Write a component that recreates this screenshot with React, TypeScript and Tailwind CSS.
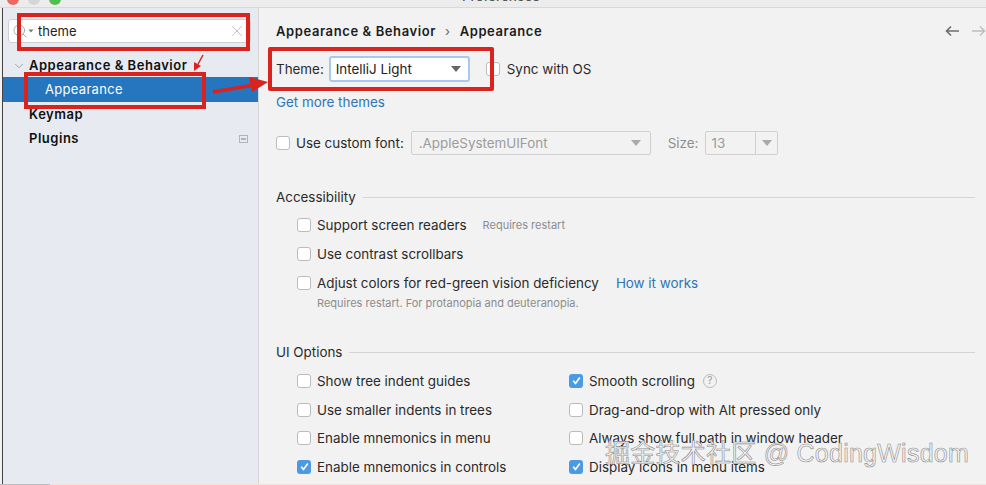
import { ChevronDown, Search, X } from "lucide-react";

const FONT = "font-['Inter','Liberation_Sans',sans-serif]";

function Box({ checked, className = "" }: { checked?: boolean; className?: string }) {
  if (checked) {
    return (
      <span className={`flex h-[14px] w-[14px] shrink-0 items-center justify-center rounded-[3px] bg-[#4a9ae4] ${className}`}>
        <svg width="11" height="11" viewBox="0 0 11 11" fill="none">
          <path d="M2.2 5.8 4.5 8.4 8.8 2.6" stroke="#fff" strokeWidth="1.7" />
        </svg>
      </span>
    );
  }
  return <span className={`block h-[14px] w-[14px] shrink-0 rounded-[3px] border border-[#bcbcbc] bg-white ${className}`} />;
}

function Option({ label, checked, children }: { label: string; checked?: boolean; children?: React.ReactNode }) {
  return (
    <div className="flex h-[28.7px] items-center">
      <Box checked={checked} />
      <span className="ml-[6px] whitespace-nowrap text-[13.4px] text-[#2a2a2a]">{label}</span>
      {children}
    </div>
  );
}

function GroupTitle({ title }: { title: string }) {
  return (
    <div className="flex h-[20px] items-center gap-[7px]">
      <span className="text-[13.4px] text-[#2a2a2a]">{title}</span>
      <span className="h-px flex-1 bg-[#d4d4d4]" />
    </div>
  );
}

function Caret({ className = "" }: { className?: string }) {
  return <span className={`block h-0 w-0 border-x-[5px] border-t-[6px] border-x-transparent ${className}`} />;
}

export default function App() {
  return (
    <div className={`relative flex h-[485px] w-[986px] flex-col overflow-hidden bg-[#f2f2f2] ${FONT}`}>
      {/* title bar, cut off by the crop */}
      <div className="relative h-[8px] shrink-0 overflow-hidden border-b border-[#d8d8d8] bg-[#ececec]">
        <span className="absolute left-[7px] top-[-7px] h-[12px] w-[12px] rounded-full bg-[#ee6a5f]" />
        <span className="absolute left-[28px] top-[-7px] h-[12px] w-[12px] rounded-full bg-[#d5d5d5]" />
        <span className="absolute left-[49px] top-[-7px] h-[12px] w-[12px] rounded-full bg-[#4fc04f]" />
        <span className="absolute left-[462px] top-[-12px] text-[13.4px] font-medium leading-[16px] text-[#555]">Preferences</span>
      </div>

      <div className="flex min-h-0 flex-1">
        {/* sidebar */}
        <div className="ml-[2px] w-[256px] shrink-0 border-l border-[#444] bg-[#e7ebf1] pt-[11px]">
          <div className="ml-[5px] mr-[7px] flex h-[24px] items-center rounded-[3px] border border-[#cfcfcf] bg-white pl-[3px] pr-[4px]">
            <Search size={16} strokeWidth={1.2} className="text-[#9a9a9a]" />
            <Caret className="ml-[-2px] scale-50 border-t-[#777]" />
            <span className="ml-[2px] flex-1 pt-px text-[13px] text-[#222]">theme</span>
            <X size={18} strokeWidth={0.8} className="text-[#999]" />
          </div>
          <div className="mt-[10px] text-[13px] font-semibold tracking-[0.52px] text-[#111]">
            <div className="flex h-[24px] items-center pl-[9px] pt-[2px]">
              <ChevronDown size={14} strokeWidth={1.3} className="text-[#8b8b8b]" />
              <span className="ml-[3px]">Appearance &amp; Behavior</span>
            </div>
            <div className="flex h-[25px] items-center bg-[#2675bf] pl-[42px] font-normal tracking-[0.3px] text-white">Appearance</div>
            <div className="flex h-[24px] items-center pl-[26px] pt-[2px]">Keymap</div>
            <div className="flex h-[24px] items-center justify-between pl-[26px] pr-[10px] pt-[2px]">
              <span>Plugins</span>
              <span className="flex h-[8px] w-[9px] items-center justify-center border border-[#b0b5bb]">
                <span className="h-[2px] w-[5px] bg-[#b0b5bb]" />
              </span>
            </div>
          </div>
        </div>
        <div className="w-px shrink-0 bg-[#d6d6d6]" />

        {/* content */}
        <div className="min-w-0 flex-1 pl-[17px] pr-[11px]">
          <div className="flex h-[38px] items-center justify-between pt-[8px]">
            <div className="flex items-center pt-[2px] text-[13px] font-semibold tracking-[0.6px] text-[#1c1c1c]">
              <span>Appearance &amp; Behavior</span>
              <span className="mx-[9px] font-normal text-[#666]">›</span>
              <span>Appearance</span>
            </div>
            <div className="mr-[-11px] flex items-center gap-[13px]">
              <svg width="14" height="12" viewBox="0 0 14 12" fill="none" stroke="#6e6e6e" strokeWidth="1.6">
                <path d="M14 6H1.5M6 1.5 1.5 6 6 10.5" />
              </svg>
              <svg width="14" height="12" viewBox="0 0 14 12" fill="none" stroke="#bdbdbd" strokeWidth="1.4">
                <path d="M0 6H12.5M8 1.5 12.5 6 8 10.5" />
              </svg>
            </div>
          </div>

          <div className="mt-[10px] flex h-[26px] items-center">
            <span className="text-[13.4px] text-[#2a2a2a]">Theme:</span>
            <div className="ml-[5px] flex h-[26px] w-[141px] items-center justify-between rounded-[3px] border-2 border-[#a6c9ec] bg-white pl-[5px] pr-[7px] text-[13.4px] text-[#222]">
              <span>IntelliJ Light</span>
              <Caret className="border-t-[#666]" />
            </div>
            <Box className="ml-[16px]" />
            <span className="ml-[7px] text-[13.4px] text-[#2a2a2a]">Sync with OS</span>
          </div>

          <div className="mt-[10px] text-[13.4px] leading-[20px] text-[#2f75b5]">Get more themes</div>

          <div className="mt-[19px] flex h-[24px] items-center">
            <Box />
            <span className="ml-[6px] text-[13.4px] text-[#2a2a2a]">Use custom font:</span>
            <div className="ml-[7px] flex h-[24px] w-[240px] items-center justify-between rounded-[2px] border border-[#d0d0d0] pl-[7px] pr-[9px] text-[13.4px] text-[#9c9c9c]">
              <span>.AppleSystemUIFont</span>
              <Caret className="border-t-[#aaa]" />
            </div>
            <span className="ml-[17px] text-[13.4px] text-[#8e8e8e]">Size:</span>
            <div className="ml-[7px] flex h-[24px] w-[73px] items-center rounded-[2px] border border-[#d0d0d0] text-[13.4px] text-[#9c9c9c]">
              <span className="w-[50px] border-r border-[#d0d0d0] pl-[5px] leading-[22px]">13</span>
              <Caret className="ml-[6px] border-t-[#aaa]" />
            </div>
          </div>

          <div className="mt-[32px]">
            <GroupTitle title="Accessibility" />
            <div className="mt-[4px] pl-[21px]">
              <Option label="Support screen readers">
                <span className="ml-[16px] text-[11px] text-[#8c8c8c]">Requires restart</span>
              </Option>
              <Option label="Use contrast scrollbars" />
              <Option label="Adjust colors for red-green vision deficiency">
                <span className="ml-[17px] text-[13.4px] text-[#2f75b5]">How it works</span>
              </Option>
              <div className="pl-[20px] text-[11px] leading-[13px] text-[#8c8c8c]">Requires restart. For protanopia and deuteranopia.</div>
            </div>
          </div>

          <div className="mt-[32px]">
            <GroupTitle title="UI Options" />
            <div className="mt-[4.5px] grid grid-cols-[272px_1fr] pl-[21px]">
              <Option label="Show tree indent guides" />
              <Option label="Smooth scrolling" checked>
                <span className="ml-[8px] flex h-[14px] w-[14px] items-center justify-center rounded-full border border-[#bbb] text-[10px] text-[#999]">?</span>
              </Option>
              <Option label="Use smaller indents in trees" />
              <Option label="Drag-and-drop with Alt pressed only" />
              <Option label="Enable mnemonics in menu" />
              <Option label="Always show full path in window header" />
              <Option label="Enable mnemonics in controls" checked />
              <Option label="Display icons in menu items" checked />
            </div>
          </div>
        </div>
      </div>

      {/* red annotations drawn on top of the screenshot */}
      <div className="absolute left-[17px] top-[13px] h-[38px] w-[233px] border-[4px] border-[#d8231f]" />
      <div className="absolute left-[24px] top-[72px] h-[37px] w-[182px] border-[4px] border-[#d8231f]" />
      <div className="absolute left-[268px] top-[47px] h-[44px] w-[226px] rounded-[2px] border-[4px] border-[#d8231f]" />
      <svg className="absolute left-0 top-0" width="986" height="485" fill="none">
        <path d="M203 55 197 66" stroke="#d8231f" strokeWidth="1.5" />
        <path d="M194 71 194 62 201 66Z" fill="#d8231f" />
        <path d="M213 92 254 85" stroke="#d8231f" strokeWidth="3.5" />
        <path d="M268 82 249 77 252 92Z" fill="#d8231f" />
      </svg>

      {/* watermark */}
      <div className="absolute left-[605px] top-[436px] whitespace-nowrap font-['Liberation_Sans','Noto_Sans_CJK_SC',sans-serif] text-[25px] leading-[34px] tracking-[0.25px] text-[#f4f4f4] [-webkit-text-stroke:0.6px_#8d8d8d]">
        掘金技术社区 @ CodingWisdom
      </div>
      <div className="absolute bottom-0 left-0 h-px w-full bg-[#f3e2da]" />
      <div className="absolute bottom-0 left-0 h-px w-[50px] bg-[#bdbdbd]" />
    </div>
  );
}
